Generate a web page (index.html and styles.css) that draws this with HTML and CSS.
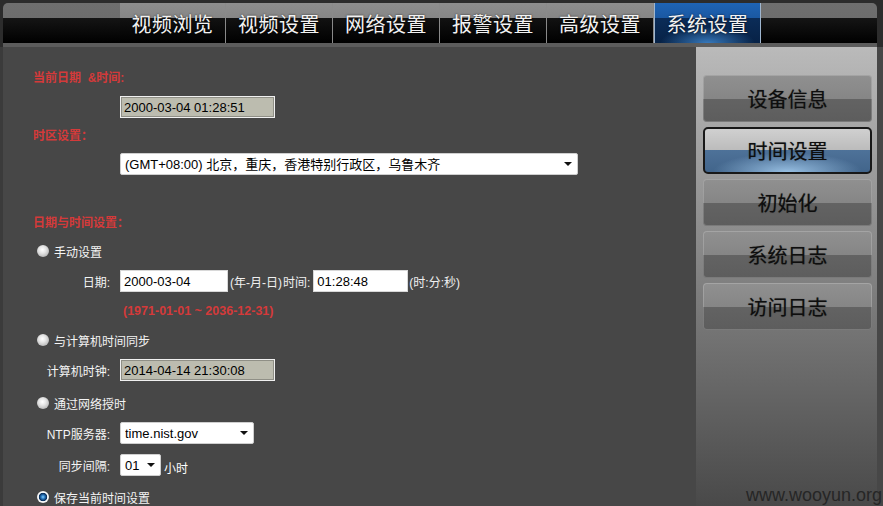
FILE: index.html
```html
<!DOCTYPE html>
<html lang="zh-CN">
<head>
<meta charset="utf-8">
<title>系统设置 - 时间设置</title>
<link rel="stylesheet" href="styles.css">
</head>
<body>
<header class="top">
  <nav class="nav">
    <a class="tab">视频浏览</a>
    <a class="tab">视频设置</a>
    <a class="tab">网络设置</a>
    <a class="tab">报警设置</a>
    <a class="tab">高级设置</a>
    <a class="tab active">系统设置</a>
  </nav>
</header>
<div class="main">
  <section class="content">
    <div class="title t1">当前日期 &nbsp;&amp;时间:</div>
    <div class="row r-cur"><input class="inp ro w155" value="2000-03-04 01:28:51" readonly></div>
    <div class="title t2">时区设置：</div>
    <div class="row r-tz"><span class="sel w458"><select><option>(GMT+08:00) 北京，重庆，香港特别行政区，乌鲁木齐</option></select></span></div>
    <div class="title t3">日期与时间设置：</div>

    <label class="opt o1"><span class="radio"></span>手动设置</label>
    <div class="row r-date">
      <span class="lab">日期:</span>
      <input class="inp w108" value="2000-03-04">
      <span class="hint">(年-月-日)</span><span class="hint2">时间:</span>
      <input class="inp w95 tm" value="01:28:48">
      <span class="hint3">(时:分:秒)</span>
    </div>
    <div class="range">(1971-01-01 ~ 2036-12-31)</div>

    <label class="opt o2"><span class="radio"></span>与计算机时间同步</label>
    <div class="row r-pc">
      <span class="lab">计算机时钟:</span>
      <input class="inp ro w155" value="2014-04-14 21:30:08" readonly>
    </div>

    <label class="opt o3"><span class="radio"></span>通过网络授时</label>
    <div class="row r-ntp">
      <span class="lab">NTP服务器:</span>
      <span class="sel w134"><select><option>time.nist.gov</option></select></span>
    </div>
    <div class="row r-int">
      <span class="lab">同步间隔:</span>
      <span class="sel w41"><select><option>01</option></select></span>
      <span class="unit">小时</span>
    </div>

    <label class="opt o4"><span class="radio on"></span>保存当前时间设置</label>
  </section>
  <aside class="side">
    <a class="sbtn">设备信息</a>
    <a class="sbtn active">时间设置</a>
    <a class="sbtn">初始化</a>
    <a class="sbtn">系统日志</a>
    <a class="sbtn">访问日志</a>
  </aside>
</div>
<div class="watermark">www.wooyun.org</div>
</body>
</html>
```
FILE: styles.css
```css
* { box-sizing: border-box; }
html, body { margin: 0; padding: 0; }
body {
  width: 883px;
  height: 506px;
  overflow: hidden;
  position: relative;
  background: #474747;
  color: #fff;
  font: 12px "Liberation Sans", "Noto Sans CJK SC", sans-serif;
}

/* top navigation */
.top {
  background: #2c2c2c;
  padding: 3px 6px 0 3px;
}
.nav {
  height: 44px;
  display: flex;
  padding-left: 117px;
  border-radius: 5px 5px 0 0;
  border-bottom: 4px solid #5c5c5c;
  background: linear-gradient(#6f6f6f 0, #6d6d6d 15px, #151515 15px, #000 100%);
}
.tab {
  width: 107px;
  height: 40px;
  display: flex;
  align-items: center;
  justify-content: center;
  padding-top: 1px;
  border-right: 1px solid #8a8a8a;
  color: #f2f2f2;
  font: 20px "Noto Sans CJK SC", sans-serif;
  letter-spacing: 0.5px;
  text-shadow: 0 0 2px rgba(0,0,0,.8);
  background: linear-gradient(#8e8e8e 0, #868686 15px, #121212 15px, #000 100%);
}
.tab:first-child { width: 106px; }
.tab.active {
  border-left: 1px solid #9fb6cf;
  border-right: 1px solid #9fb6cf;
  background:
    radial-gradient(ellipse 45% 40% at 50% 100%, rgba(60,130,200,.9), rgba(60,130,200,0)),
    linear-gradient(#1f64b5 0, #1a58a2 15px, #0b2c58 15px, #072246 100%);
}

/* main */
.main {
  display: flex;
  height: 459px;
}
.content {
  width: 696px;
  border-left: 3px solid #3b3b3b;
  padding: 22px 0 0 30px;
}
.side {
  width: 181px;
  padding: 28px 5px 0 7px;
  display: flex;
  flex-direction: column;
  gap: 5px;
  background: linear-gradient(#bababa, #494949);
}
.sbtn {
  height: 47px;
  display: flex;
  align-items: center;
  justify-content: center;
  border-radius: 4px;
  color: #0e0e0e;
  font: 400 20px "Noto Sans CJK SC", sans-serif;
  text-shadow: 0 0 1px rgba(0,0,0,.5);
  background: linear-gradient(#909090 0, #868686 50%, #636363 50%, #5d5d5d 100%);
  box-shadow: inset 0 0 0 1px rgba(255,255,255,.18);
}
.sbtn.active {
  border: 2px solid #181818;
  border-radius: 5px;
  box-shadow: none;
  background:
    radial-gradient(ellipse 45% 45% at 50% 100%, rgba(160,200,235,.9), rgba(160,200,235,0)),
    linear-gradient(#d0d0d0 0, #bcbcbc 48%, #4e7299 48%, #42658b 100%);
}

/* form */
.title {
  color: #d43a3a;
  font-weight: bold;
  line-height: 16px;
  height: 16px;
}
.t1 { margin-top: 1px; margin-bottom: -1px; }
.t2 { margin-top: 10px; }
.t3 { margin-top: 40px; }
.row {
  display: flex;
  align-items: center;
  height: 22px;
}
.r-cur { margin-top: 11px; padding-left: 87px; }
.r-tz { margin-top: 9px; padding-left: 87px; }
.lab {
  width: 79px;
  text-align: right;
  margin-right: 8px;
  padding-right: 2px;
  color: #f4f4f4;
}
.inp {
  height: 22px;
  border: 1px solid #d8d8d8;
  background: #fff;
  color: #000;
  font: 13px "Liberation Sans", sans-serif;
  padding: 0 0 0 3px;
  outline: none;
}
.inp.ro {
  background: #bcbcaf;
  border: 1px solid #f0f0f0;
  box-shadow: inset 0 0 0 1px #8f8f86;
}
.w155 { width: 155px; }
.w108 { width: 108px; }
.w95 { width: 95px; }
.hint { margin-left: 2px; color: #f0f0f0; }
.hint2 { margin-left: 1px; color: #f0f0f0; margin-right: 3px; }
.hint3 { color: #f0f0f0; margin-left: 1px; }
.unit { margin-left: 3px; margin-top: 4px; }

.sel {
  position: relative;
  display: inline-block;
  height: 22px;
}
.sel select {
  appearance: none;
  -webkit-appearance: none;
  width: 100%;
  height: 22px;
  border: 1px solid #cfcfcf;
  border-radius: 2px;
  background: #fff;
  color: #000;
  font: 13px "Liberation Sans", "Noto Sans CJK SC", sans-serif;
  padding: 0 0 0 4px;
  outline: none;
}
.sel::after {
  content: "";
  position: absolute;
  right: 6px;
  top: 9px;
  border-left: 4px solid transparent;
  border-right: 4px solid transparent;
  border-top: 4px solid #111;
}
.w458 { width: 458px; }
.w134 { width: 134px; }
.w41 { width: 41px; }

.opt {
  display: flex;
  align-items: center;
  height: 16px;
  padding-left: 4px;
  gap: 5px;
  color: #f4f4f4;
}
.o1 { margin-top: 12px; }
.o2 { margin-top: 13px; }
.o3 { margin-top: 14px; }
.o4 { margin-top: 13px; }
.radio {
  width: 12px;
  height: 12px;
  border-radius: 50%;
  background: radial-gradient(circle at 45% 40%, #ffffff 0, #e6e6e6 35%, #a9a9a9 90%, #8a8a8a 100%);
}
.radio.on {
  background: radial-gradient(circle at 50% 50%, #86d2ff 0, #2a78c0 22%, #0b3463 42%, #0b3463 46%, #ffffff 54%, #d6d6d6 85%, #9a9a9a 100%);
}
.r-date { margin-top: 11px; }
.range {
  margin-top: 11px;
  padding-left: 90px;
  height: 16px;
  line-height: 16px;
  color: #d43a3a;
  font-weight: bold;
  font-size: 12.5px;
}
.r-pc { margin-top: 11px; }
.r-ntp { margin-top: 11px; }
.r-int { margin-top: 10px; }

.watermark {
  position: absolute;
  right: 1px;
  bottom: 0;
  font: 18px "Liberation Sans", sans-serif;
  color: #262626;
}
```
